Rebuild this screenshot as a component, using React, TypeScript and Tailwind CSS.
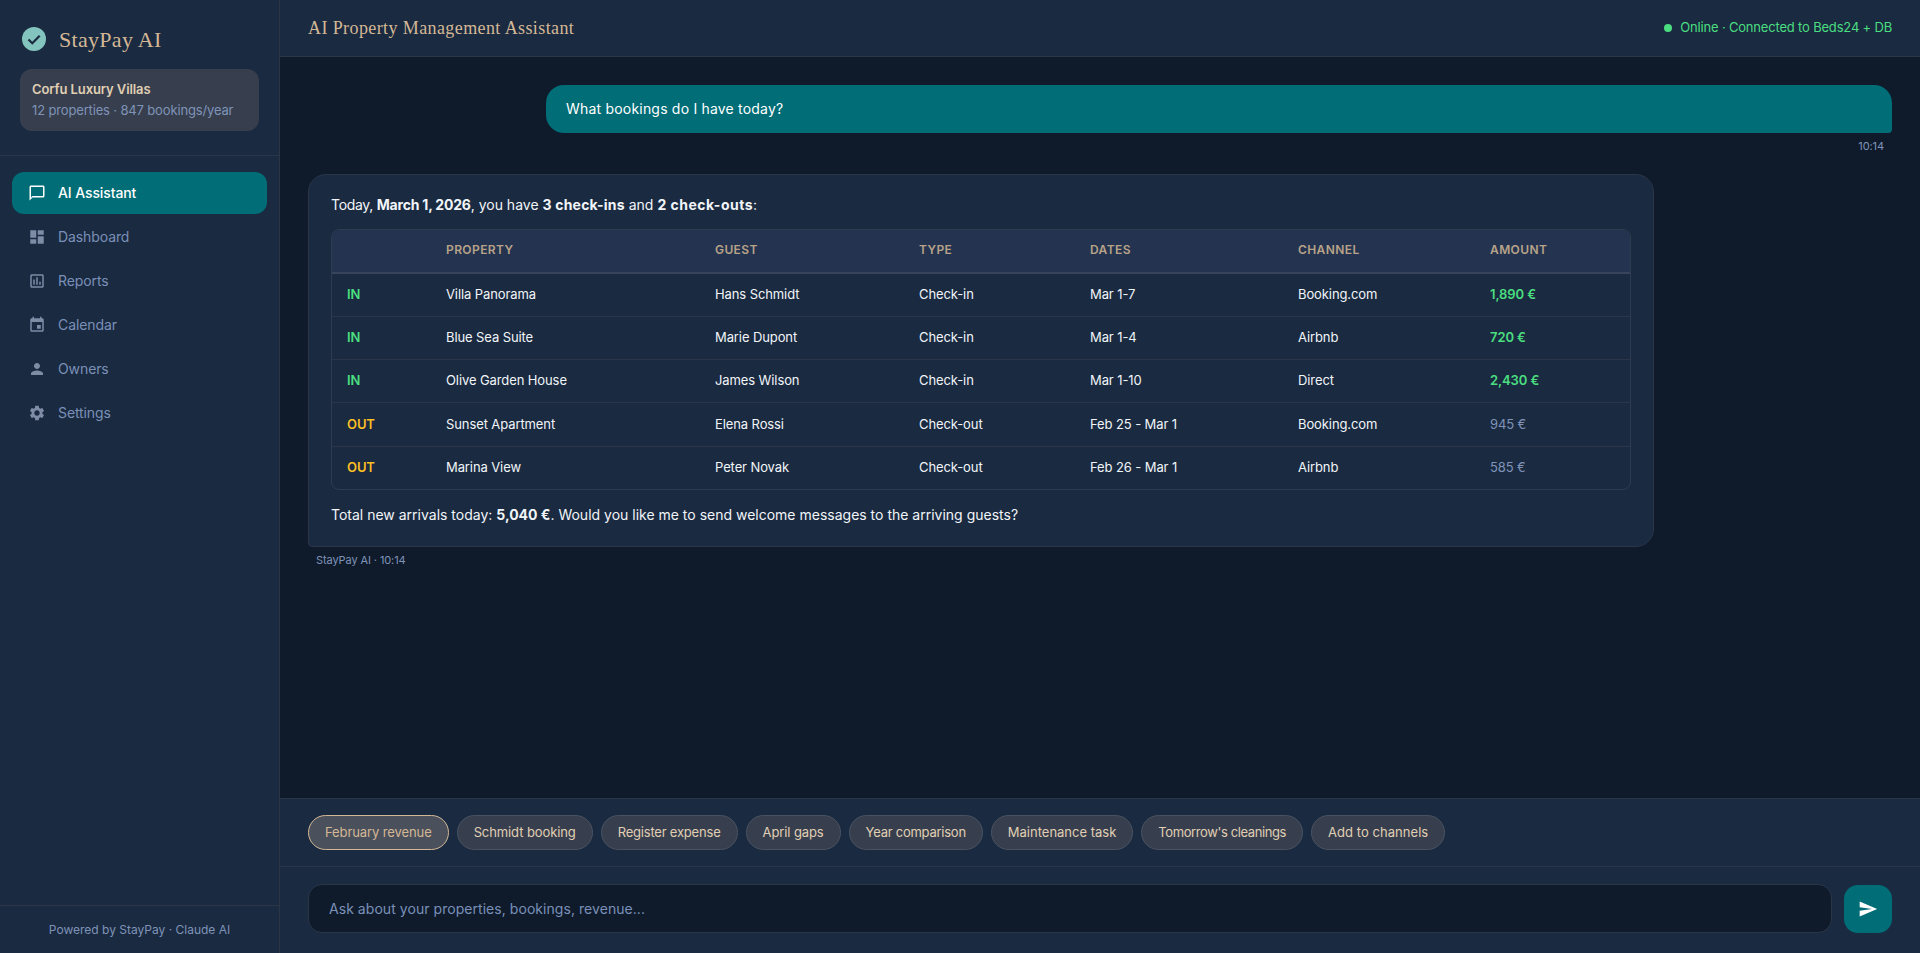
import { MdChatBubbleOutline, MdDashboard, MdOutlineAssessment, MdEvent, MdPerson, MdSettings, MdSend } from "react-icons/md";

const nav = [
  { label: "AI Assistant", Icon: MdChatBubbleOutline, active: true },
  { label: "Dashboard", Icon: MdDashboard },
  { label: "Reports", Icon: MdOutlineAssessment },
  { label: "Calendar", Icon: MdEvent },
  { label: "Owners", Icon: MdPerson },
  { label: "Settings", Icon: MdSettings },
];

const rows = [
  ["IN", "Villa Panorama", "Hans Schmidt", "Check-in", "Mar 1-7", "Booking.com", "1,890 €"],
  ["IN", "Blue Sea Suite", "Marie Dupont", "Check-in", "Mar 1-4", "Airbnb", "720 €"],
  ["IN", "Olive Garden House", "James Wilson", "Check-in", "Mar 1-10", "Direct", "2,430 €"],
  ["OUT", "Sunset Apartment", "Elena Rossi", "Check-out", "Feb 25 - Mar 1", "Booking.com", "945 €"],
  ["OUT", "Marina View", "Peter Novak", "Check-out", "Feb 26 - Mar 1", "Airbnb", "585 €"],
];

const chips = [
  { label: "February revenue", track: "tracking-[-0.1px]" },
  { label: "Schmidt booking", track: "tracking-[-0.1px]" },
  { label: "Register expense", track: "tracking-[-0.2px]" },
  { label: "April gaps", track: "tracking-[-0.1px]" },
  { label: "Year comparison", track: "tracking-[-0.25px]" },
  { label: "Maintenance task", track: "tracking-[0px]" },
  { label: "Tomorrow's cleanings", track: "tracking-[-0.4px]" },
  { label: "Add to channels", track: "tracking-[0.05px]" },
];
const heads = ["", "PROPERTY", "GUEST", "TYPE", "DATES", "CHANNEL", "AMOUNT"];
const widths = ["w-[99px]", "w-[269px]", "w-[204px]", "w-[171px]", "w-[208px]", "w-[192px]", "w-[155px]"];

export default function App() {
  return (
    <div className="flex h-[953px] w-full overflow-hidden bg-[#0f1b2b] font-['Inter',sans-serif] text-white">
      <aside className="flex w-[280px] shrink-0 flex-col border-r border-[#2a3548] bg-[#1a2a40]">
        <div className="border-b border-[#2a3548] px-5 pb-6 pt-[27px]">
          <div className="flex h-6 items-center gap-[13px] pl-[2px]">
            <svg width="24" height="24" viewBox="0 0 24 24" className="shrink-0">
              <circle cx="12" cy="12" r="12" fill="#83c5be" />
              <path d="M6.5 12.5l3.8 3.8 7.4-7.6" fill="none" stroke="#1a2a40" strokeWidth="2.2" />
            </svg>
            <span className="font-['Liberation_Serif',serif] text-[22px] tracking-[0.3px] text-[#d4b896]">StayPay AI</span>
          </div>
          <div className="mt-[18px] flex h-[62px] flex-col justify-center rounded-xl bg-[#373f4e] px-3">
            <div className="text-[13px] font-semibold leading-[21px] tracking-[-0.1px] text-[#e0cfb4]">Corfu Luxury Villas</div>
            <div className="text-[13px] leading-[21px] tracking-[-0.15px] text-[#7f93b8]">12 properties · 847 bookings/year</div>
          </div>
        </div>
        <nav className="flex flex-1 flex-col gap-[2px] px-3 pt-4">
          {nav.map(({ label, Icon, active }) => (
            <div key={label} className={`flex h-[42px] items-center gap-3 rounded-xl px-4 text-sm tracking-[-0.1px] ${active ? "bg-[#006d77] font-medium text-white" : "text-[#7a90b8]"}`}>
              <Icon size={18} className={active ? "text-white" : "text-[#7e8ca6]"} />
              <span>{label}</span>
            </div>
          ))}
        </nav>
        <div className="flex h-[48px] items-center justify-center border-t border-[#2a3548] text-xs text-[#7f93b8]">Powered by StayPay · Claude AI</div>
      </aside>
      <main className="flex min-w-0 flex-1 flex-col">
        <header className="flex h-[57px] shrink-0 items-center justify-between border-b border-[#2a3548] bg-[#1a2a40] pl-7 pr-7">
          <h1 className="font-['Liberation_Serif',serif] text-lg tracking-[0.4px] text-[#d4b896]">AI Property Management Assistant</h1>
          <div className="flex items-center gap-2 text-[13px] tracking-[-0.18px] text-[#4ade80]">
            <span className="h-2 w-2 rounded-full bg-[#4ade80]" />
            Online · Connected to Beds24 + DB
          </div>
        </header>
        <section className="min-h-0 flex-1 pl-7 pr-7 pt-7">
          <div className="ml-auto w-[1346px]">
            <div className="flex h-12 items-center rounded-[18px] rounded-br-[4px] bg-[#006d77] px-5 text-sm tracking-[0.2px] text-white">What bookings do I have today?</div>
            <div className="mr-2 mt-[6px] text-right text-[11px] leading-[14px] tracking-[-0.1px] text-[#7f93b8]">10:14</div>
          </div>
          <div className="mt-[21px] w-[1346px] rounded-[18px] rounded-bl-[4px] border border-[#2a3548] bg-[#1a2a40] px-[22px] pb-[20px] pt-[19px] text-sm">
            <p className="leading-[22px] text-[#f1f5f9]">
              <span className="tracking-[-0.3px]">Today, </span>
              <b className="tracking-[-0.2px]">March 1, 2026</b>, you have <b className="tracking-[0.2px]">3 check-ins</b> and <b className="tracking-[0.5px]">2 check-outs</b>:
            </p>
            <div className="mt-[13px] overflow-hidden rounded-lg border border-[#2f3b4f]">
              <table className="w-full table-fixed border-collapse text-[13px] tracking-[-0.1px]">
                <thead>
                  <tr className="h-[43px] border-b-2 border-[#38445a] bg-[#243450]">
                    {heads.map((h, i) => (
                      <th key={i} className={`${widths[i]} px-[15px] pb-[2px] text-left text-xs font-semibold tracking-[0.4px] text-[#b8a389]`}>{h}</th>
                    ))}
                  </tr>
                </thead>
                <tbody>
                  {rows.map((r, i) => (
                    <tr key={i} className="h-[43.3px] border-b border-[#2a3548] last:border-b-0">
                      {r.map((c, j) => {
                        let cls = "text-[#f1f5f9]";
                        if (j === 0) cls = `font-semibold ${c === "IN" ? "text-[#4ade80]" : "text-[#fbbf24]"}`;
                        if (j === 6) cls = c === "945 €" || c === "585 €" ? "text-[#7f93b8]" : "font-semibold text-[#4ade80]";
                        return <td key={j} className={`px-[15px] pb-[1px] ${cls}`}>{c}</td>;
                      })}
                    </tr>
                  ))}
                </tbody>
              </table>
            </div>
            <p className="mt-[14px] leading-[22px] text-[#f1f5f9]">
              Total new arrivals today: <b>5,040 €</b>. Would you like me to send welcome messages to the arriving guests?
            </p>
          </div>
          <div className="ml-2 mt-[6px] text-[11px] leading-[14px] tracking-[-0.1px] text-[#7f93b8]">StayPay AI · 10:14</div>
        </section>
        <div className="flex h-[69px] shrink-0 items-center gap-2 border-y border-[#2a3548] bg-[#1a2a40] px-7">
          {chips.map(({ label, track }, i) => (
            <span key={label} className={`flex h-[35px] items-center rounded-full border px-4 text-[13px] ${track} ${i === 0 ? "border-[#d4b896] bg-[#4a505c] text-[#d4b896]" : "border-[#4a5260] bg-[#373f4e] text-[#e0cfb4]"}`}>{label}</span>
          ))}
        </div>
        <div className="flex h-[86px] shrink-0 items-center gap-3 bg-[#1a2a40] px-7 pb-[3px]">
          <div className="flex h-[49px] flex-1 items-center rounded-[14px] border border-[#2a3548] bg-[#0f1b2b] px-5 text-sm tracking-[0.05px] text-[#7a90b8]">Ask about your properties, bookings, revenue...</div>
          <div className="flex h-12 w-12 items-center justify-center rounded-[14px] bg-[#006d77]">
            <MdSend size={20} className="text-white" />
          </div>
        </div>
      </main>
    </div>
  );
}
